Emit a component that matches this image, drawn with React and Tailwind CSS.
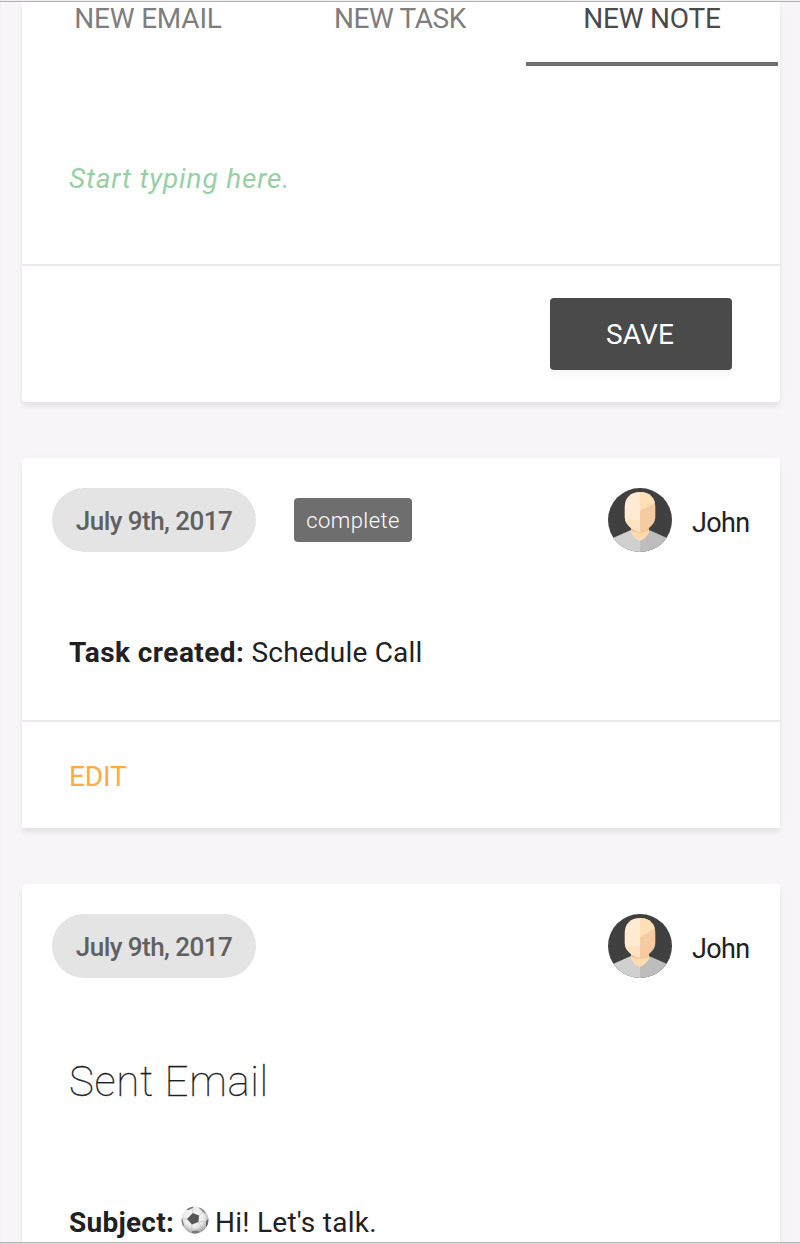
function Avatar() {
  return (
    <svg viewBox="0 0 64 64" className="block size-16 shrink-0">
      <defs>
        <clipPath id="disc">
          <circle cx="32" cy="32" r="32" />
        </clipPath>
        <clipPath id="head">
          <path d="M32 4C41.500 4 47.300 10 47.300 19V29C47.300 37 38 43.500 32 43.500C26 43.500 16.700 37 16.700 29V19C16.700 10 22.500 4 32 4Z" />
        </clipPath>
      </defs>
      <g clipPath="url(#disc)">
        <rect width="64" height="64" fill="#404040" />
        <path d="M23 42L32 48V65H-1V53Q3 51 6 49.500Z" fill="#d0d0d0" />
        <path d="M41 42L32 48V65H65V53Q61 51 58 49.500Z" fill="#bdbdbd" />
        <path d="M23 36H41V45Q38 50 32 53Q26 50 23 45Z" fill="#ffdcae" />
        <path d="M23 39Q27 43.500 32 43.500Q37 43.500 41 39V42Q36 45 32 45Q27 45 23 42Z" fill="#f2c192" />
        <g clipPath="url(#head)">
          <rect x="16" y="3" width="16" height="42" fill="#ffead3" />
          <path d="M16 32H32V45H16Z" fill="#fde2c4" />
          <rect x="32" y="3" width="16" height="42" fill="#f6cba1" />
          <path d="M32 3H48V14L32 23Z" fill="#ffdfb6" />
        </g>
      </g>
    </svg>
  );
}

function SoccerBall() {
  return (
    <svg viewBox="0 0 28 28" className="mt-[3px] ml-[7px] block size-7 shrink-0">
      <defs>
        <radialGradient id="ball" cx="45%" cy="38%" r="62%">
          <stop offset="0" stopColor="#ffffff" />
          <stop offset="0.65" stopColor="#e8e8e8" />
          <stop offset="1" stopColor="#9b9b9b" />
        </radialGradient>
        <clipPath id="ballEdge">
          <circle cx="14" cy="14" r="13.400" />
        </clipPath>
      </defs>
      <circle cx="14" cy="14" r="13.400" fill="url(#ball)" />
      <g clipPath="url(#ballEdge)">
        <path d="M11.800 7L18 9.500L17.500 16L11 18.500L6 13Z" fill="#585858" />
        <path d="M7 1L13 0L12 2L7.500 4L4 4Z" fill="#777" />
        <path d="M18 1L23 4L25 8.500L22 6L18.500 2.500Z" fill="#858585" />
        <path d="M28 12V20L25 20.500L25 15.500Z" fill="#666" />
        <path d="M0 11L1.500 13L3 19L2 21L0 18Z" fill="#858585" />
        <path d="M10.500 25.500L15 24.500L18.500 25.500L16 28H11Z" fill="#777" />
        <path d="M11.800 7V2M18 9.500L22 6M17.500 16L25 15.500M17.500 16L20.500 21L15 24.500M20.500 21L25 20.500M11 18.500L10.500 25.500L3 19M6 13L1.500 13" fill="none" stroke="#c2c2c2" strokeWidth="0.700" />
      </g>
    </svg>
  );
}

function DateBadge() {
  return (
    <span className="flex h-16 w-[204px] items-center justify-center rounded-full bg-[#e4e4e4] pt-0.5 text-[26px] leading-8 font-medium tracking-[-0.55px] whitespace-nowrap text-[#606060]">
      July 9th, 2017
    </span>
  );
}

function CardHeader({ status }) {
  return (
    <header className="flex h-16 items-center pl-[30px]">
      <DateBadge />
      {status && (
        <span className="ml-[38px] flex h-11 w-[118px] items-center justify-center rounded bg-[#6e6e6e] pt-0.5 text-[22px] leading-8 font-light tracking-[0.4px] text-white">
          {status}
        </span>
      )}
      <div className="mr-7 ml-auto flex items-center">
        <Avatar />
        <span className="ml-5 w-[60px] pt-1.5 text-[27px] leading-8 tracking-[-0.6px] whitespace-nowrap">John</span>
      </div>
    </header>
  );
}

const cardShadow = "shadow-[0_5px_4px_rgba(0,0,0,0.06),0_2px_10px_rgba(0,0,0,0.025)]";

export default function App() {
  return (
    <div className="flex h-[1244px] w-[800px] flex-col overflow-hidden bg-[#f7f5f8] font-[Roboto,sans-serif] text-[28px] leading-10 text-[#212121]">
      <div className="h-0.5 shrink-0 border-b border-[#b4b2b5] bg-[#f0eff1]" />
      <main className="flex min-h-0 flex-1 flex-col gap-14 overflow-hidden border-l-2 border-[#f4f2f5] pr-5 pl-5">
        <section className={`h-[400px] shrink-0 rounded-b bg-white ${cardShadow}`}>
          <nav className="grid h-16 w-[756px] grid-cols-3 text-center leading-[34px] text-[#7e7e7e]">
            <span className="tracking-[-0.2px]">NEW EMAIL</span>
            <span className="tracking-[-0.4px]">NEW TASK</span>
            <span className="border-b-4 border-[#6e6e6e] tracking-[-0.2px] text-[#4a4a4a]">NEW NOTE</span>
          </nav>
          <div className="h-[200px] border-b-2 border-[#ebebeb] pt-[93px] pl-[47px] tracking-[0.85px] text-[#98cfa5] italic">
            Start typing here.
          </div>
          <div className="flex justify-end pt-8 pr-12">
            <button className="h-[72px] w-[182px] rounded bg-[#4a4a4a] pt-0.5 pr-0.5 tracking-[0.1px] text-white shadow-[0_5px_4px_rgba(0,0,0,0.04)]">
              SAVE
            </button>
          </div>
        </section>

        <section className={`h-[370px] shrink-0 rounded-t bg-white pt-[30px] ${cardShadow}`}>
          <CardHeader status="complete" />
          <div className="h-[170px] border-b-2 border-[#ebebeb] pt-[81px] pl-[47px] tracking-[0.2px]">
            <b className="tracking-[0.45px]">Task created:</b> Schedule Call
          </div>
          <div className="pt-[35px] pl-[47px] tracking-[-0.2px] text-[#ffab40]">EDIT</div>
        </section>

        <section className={`h-[400px] shrink-0 rounded-t bg-white pt-[30px] ${cardShadow}`}>
          <CardHeader />
          <h2 className="mt-[74px] pl-[47px] text-[42px] leading-[60px] font-thin tracking-[0.65px] [-webkit-text-stroke:0.3px_#212121]">
            Sent Email
          </h2>
          <div className="mt-[91px] flex pl-[47px] tracking-[0.25px]">
            <b>Subject:</b>
            <SoccerBall />
            <span className="ml-1.5">Hi! Let's talk.</span>
          </div>
        </section>
      </main>
      <div className="h-0.5 shrink-0 border-t border-[#b4b2b5] bg-[#dddddd]" />
    </div>
  );
}
